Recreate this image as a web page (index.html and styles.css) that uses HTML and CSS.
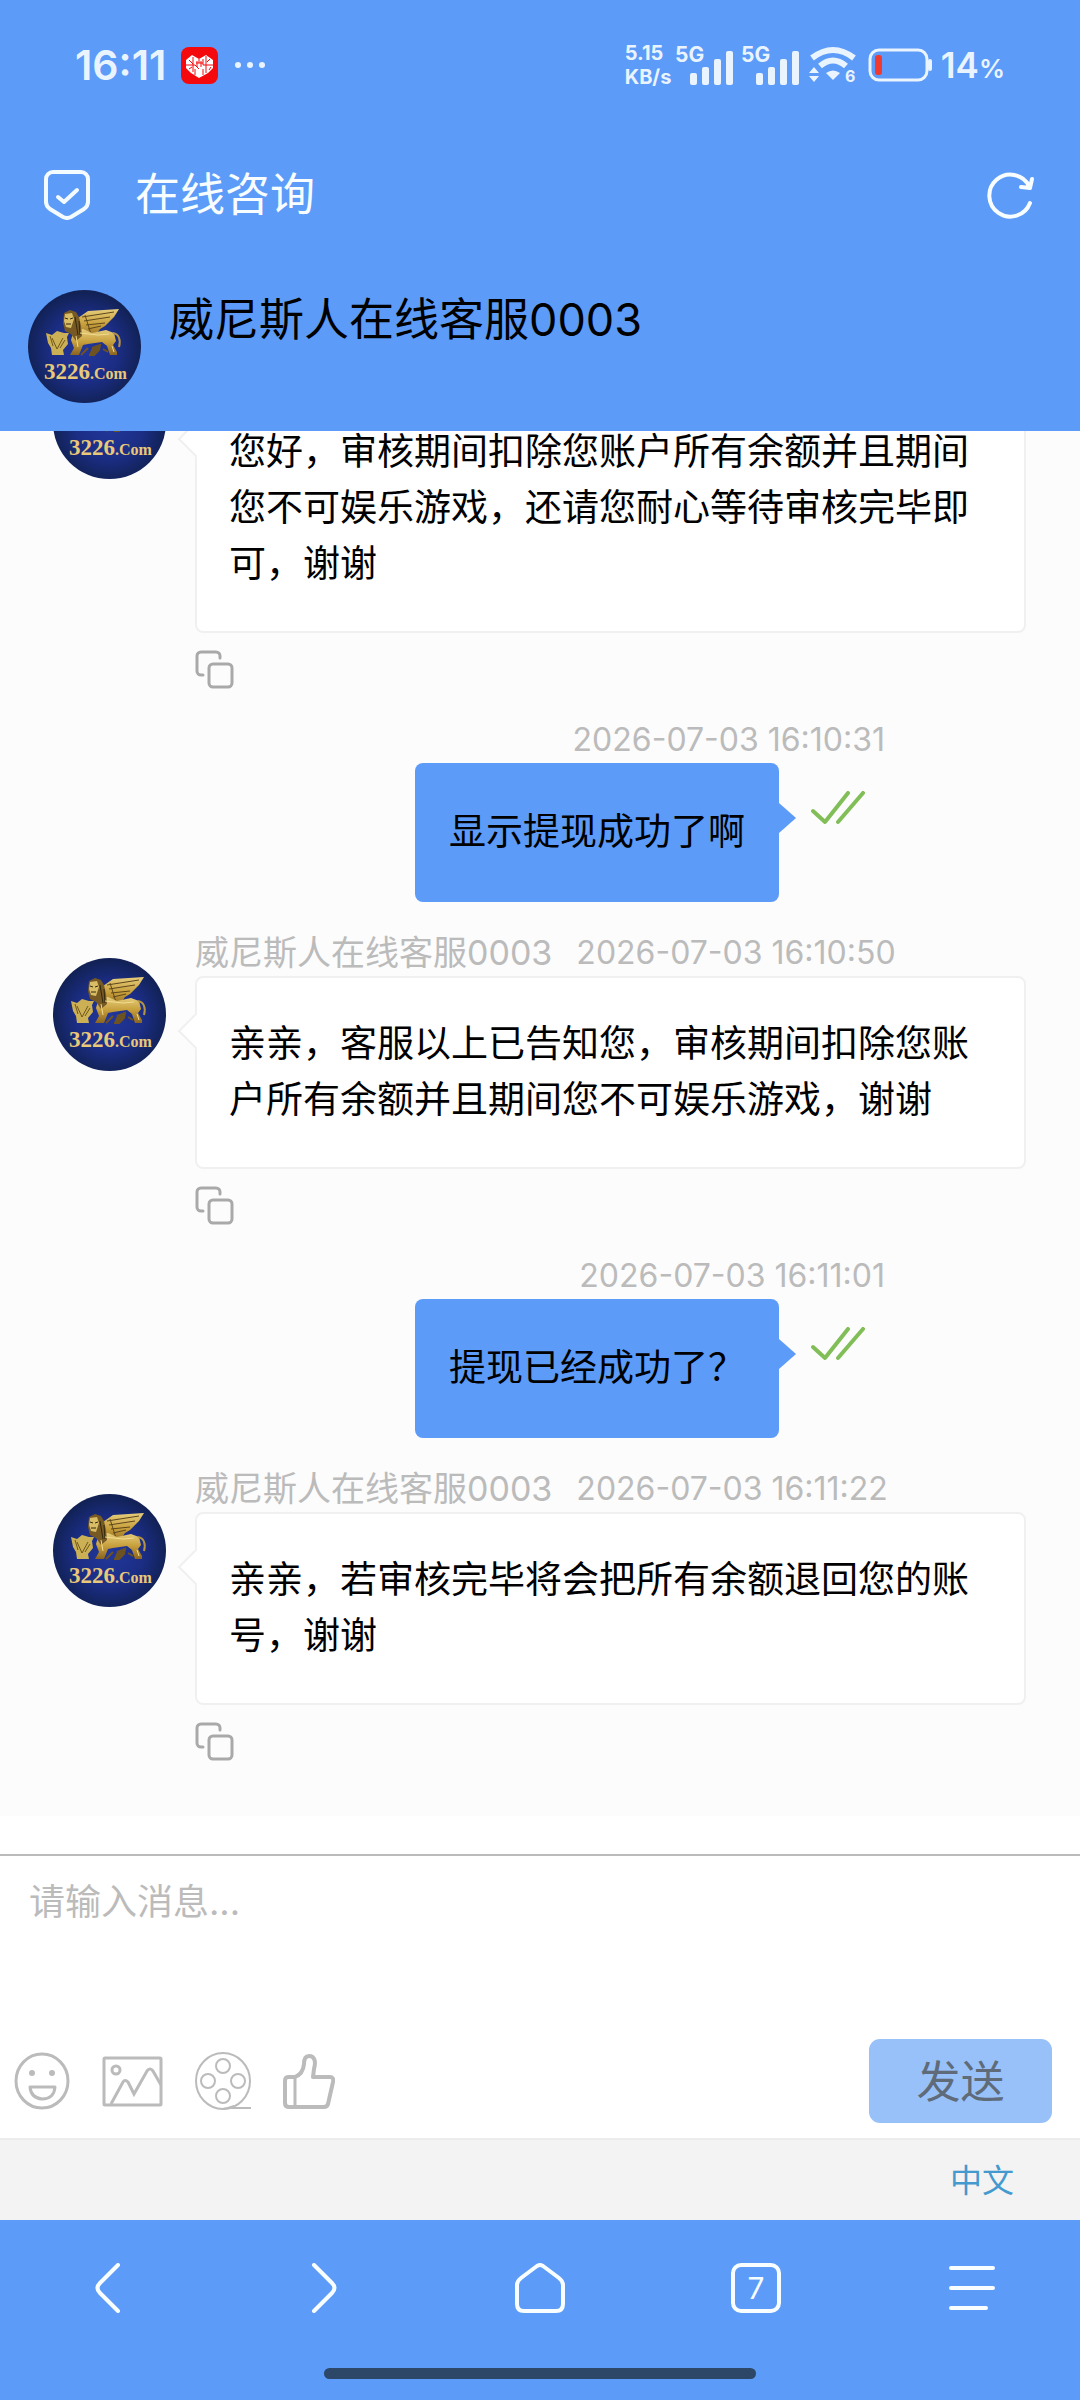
FILE: index.html
```html
<!DOCTYPE html>
<html lang="zh-CN">
<head>
<meta charset="utf-8">
<meta name="viewport" content="width=device-width, initial-scale=1">
<title>在线咨询</title>
<link rel="stylesheet" href="styles.css">
</head>
<body>
<svg class="sprite" aria-hidden="true">
  <defs>
    <radialGradient id="navy" cx="50%" cy="52%" r="50%">
      <stop offset="0" stop-color="#22379c"/>
      <stop offset="0.6" stop-color="#1b2d84"/>
      <stop offset="1" stop-color="#122257"/>
    </radialGradient>
    <linearGradient id="gold" x1="0" y1="0" x2="0" y2="1">
      <stop offset="0" stop-color="#e6cd7c"/>
      <stop offset="0.5" stop-color="#c79f3c"/>
      <stop offset="1" stop-color="#8a6420"/>
    </linearGradient>
    <symbol id="logo" viewBox="0 0 113 113">
      <circle cx="56.500" cy="56.500" r="56.500" fill="url(#navy)"/>
      <path d="M50 28 60 21 91 19 86 27 82 31 77 36 72 39 67 46 56 50 50 44Z" fill="url(#gold)"/>
      <path d="M54 27 86 22M56 31 82 27M58 35 77 33M60 39 73 36M57 25 63 44" fill="none" stroke="#5e471a" stroke-width="1"/>
      <path d="M46 40 55 39 64 43 78 40 86 43 88 51 85 55 89 62 89 65 82 65 79 56 74 52 60 54 55 55 51 65 42 65 46 58 43 50Z" fill="url(#gold)"/>
      <path d="M64 58 72 55 71 60 66 65 61 65M60 58 53 65M75 59 80 62" fill="#6d5222" stroke="#6d5222" stroke-width="2"/>
      <path d="M85 43C91 44 93 50 91 57" fill="none" stroke="#b39443" stroke-width="2"/>
      <path d="M36 23 42 20 48 22 51 27 53 36 54 46 48 51 43 44 37 41 35 33Z" fill="#765923"/>
      <path d="M37 24 44 23 46 29 43 38 38 37 36 31Z" fill="#d9bd66"/>
      <path d="M37 28 40 29M42 29 45 28M38 34 43 34M47 27 50 45M51 31 52 45" stroke="#33280f" stroke-width="1"/>
      <path d="M18 43 24 45 29 41 36 43 41 43 39 47 40 54 35 60 36 65 24 65 23 58 20 53Z" fill="#ccb055"/>
      <path d="M24 48 29 59 35 48M22 46 25 56M32 58 37 50" fill="none" stroke="#705719" stroke-width="1"/>
      <path d="M52 43 70 45 81 44M48 46 50 57M84 56 86 62" fill="none" stroke="#f1dc91" stroke-width="1"/>
      <text x="16" y="89" class="logo-text">3226<tspan class="logo-small">.Com</tspan></text>
    </symbol>
    <symbol id="copy" viewBox="0 0 39 39">
      <path d="M8 25H6a4 4 0 0 1-4-4V6a4 4 0 0 1 4-4h15a4 4 0 0 1 4 4v2" fill="none" stroke="#a9a9a9" stroke-width="3" stroke-linecap="round"/>
      <rect x="14" y="14" width="23" height="23" rx="4" fill="none" stroke="#a9a9a9" stroke-width="3"/>
    </symbol>
    <symbol id="ticks" viewBox="0 0 54 34">
      <path d="M2 20 14 31 37 2M27 31 52 2" fill="none" stroke="#82be58" stroke-width="4" stroke-linecap="round" stroke-linejoin="round"/>
    </symbol>
    <symbol id="signal" viewBox="0 0 59 42">
      <text x="0" y="18" class="signal-text">5G</text>
      <g fill="#eaf4ff"><rect x="15" y="29" width="7" height="12" rx="2"/><rect x="27" y="23" width="7" height="18" rx="2"/><rect x="39" y="15" width="7" height="26" rx="2"/><rect x="51" y="7" width="7" height="34" rx="2"/></g>
    </symbol>
  </defs>
</svg>

<div class="app">
  <header class="top">
    <div class="status">
      <span class="clock">16:11</span>
      <svg class="app-badge" viewBox="0 0 37 37" aria-hidden="true">
        <rect width="37" height="37" rx="8" fill="#f40a0c"/>
        <path d="M5 13 11 8 18 12 25 8 32 13V21L27 26 18 31 10 26 5 21Z" fill="#fff"/>
        <path d="M8 13 12 17M12 10V25M5 18H14L18 22M18 12V16M22 12V18H32M25 9V26M15 16H22M16 14V20M20 14V20M14 22V28M22 22V28M29 12 26 15M8 22 11 20M28 23 30 20" fill="none" stroke="#f40a0c" stroke-width="1"/>
      </svg>
      <svg class="dots" viewBox="0 0 32 8" aria-hidden="true" fill="#eaf4ff"><circle cx="4" cy="4" r="3"/><circle cx="16" cy="4" r="3"/><circle cx="28" cy="4" r="3"/></svg>
      <span class="speed">5.15<br>KB/s</span>
      <svg class="signal"><use href="#signal"/></svg>
      <svg class="signal"><use href="#signal"/></svg>
      <svg class="wifi" viewBox="0 0 48 38" aria-hidden="true">
        <path d="M3 12Q24-4 45 12" fill="none" stroke="#eaf4ff" stroke-width="6"/>
        <path d="M11 20Q24 9 37 20" fill="none" stroke="#eaf4ff" stroke-width="6"/>
        <path d="M17 27Q24 22 31 27L24 34Z" fill="#eaf4ff"/>
        <path d="M0 27 5 21 10 27ZM0 30H10L5 36Z" fill="#eaf4ff"/>
        <text x="36" y="36" class="wifi-text">6</text>
      </svg>
      <svg class="battery" viewBox="0 0 65 34" aria-hidden="true">
        <rect x="2" y="2" width="57" height="30" rx="9" fill="none" stroke="#eaf4ff" stroke-width="3"/>
        <rect x="60" y="11" width="4" height="12" rx="2" fill="#eaf4ff"/>
        <rect x="7" y="7" width="7" height="20" rx="3" fill="#f0392f"/>
      </svg>
      <span class="charge">14<small>%</small></span>
    </div>
    <div class="title-bar">
      <svg class="shield" viewBox="0 0 46 50" aria-hidden="true">
        <path d="M9 2H37a7 7 0 0 1 7 7V32q0 4-4 7L27 47q-4 2-8 0L6 39q-4-3-4-7V9a7 7 0 0 1 7-7Z" fill="none" stroke="#f4fbff" stroke-width="4"/>
        <path d="M14 27 20 32 33 20" fill="none" stroke="#f4fbff" stroke-width="4" stroke-linecap="round" stroke-linejoin="round"/>
      </svg>
      <h1>在线咨询</h1>
      <button class="plain refresh" type="button" aria-label="刷新">
        <svg viewBox="0 0 48 48"><path d="M43 32A21 21 0 1 1 42 15M45 8 43 17 34 16" fill="none" stroke="#f8fdff" stroke-width="4" stroke-linecap="round" stroke-linejoin="round"/></svg>
      </button>
    </div>
    <div class="agent">
      <svg class="avatar"><use href="#logo"/></svg>
      <h2>威尼斯人在线客服0003</h2>
    </div>
  </header>

  <main class="chat">
    <article class="msg from-agent">
      <svg class="avatar"><use href="#logo"/></svg>
      <div class="body">
        <div class="meta"></div>
        <p class="bubble">您好，审核期间扣除您账户所有余额并且期间您不可娱乐游戏，还请您耐心等待审核完毕即可，谢谢</p>
        <button class="plain copy" type="button" aria-label="复制"><svg><use href="#copy"/></svg></button>
      </div>
    </article>
    <article class="msg from-user">
      <div class="meta"><time>2026-07-03 16:10:31</time></div>
      <div class="line"><p class="bubble">显示提现成功了啊</p><svg class="ticks"><use href="#ticks"/></svg></div>
    </article>
    <article class="msg from-agent">
      <svg class="avatar"><use href="#logo"/></svg>
      <div class="body">
        <div class="meta"><span>威尼斯人在线客服0003</span><time>2026-07-03 16:10:50</time></div>
        <p class="bubble">亲亲，客服以上已告知您，审核期间扣除您账户所有余额并且期间您不可娱乐游戏，谢谢</p>
        <button class="plain copy" type="button" aria-label="复制"><svg><use href="#copy"/></svg></button>
      </div>
    </article>
    <article class="msg from-user">
      <div class="meta"><time>2026-07-03 16:11:01</time></div>
      <div class="line"><p class="bubble">提现已经成功了？</p><svg class="ticks"><use href="#ticks"/></svg></div>
    </article>
    <article class="msg from-agent">
      <svg class="avatar"><use href="#logo"/></svg>
      <div class="body">
        <div class="meta"><span>威尼斯人在线客服0003</span><time>2026-07-03 16:11:22</time></div>
        <p class="bubble">亲亲，若审核完毕将会把所有余额退回您的账号，谢谢</p>
        <button class="plain copy" type="button" aria-label="复制"><svg><use href="#copy"/></svg></button>
      </div>
    </article>
  </main>

  <form class="composer">
    <textarea placeholder="请输入消息..." aria-label="请输入消息"></textarea>
    <div class="tools">
      <button class="plain tool" type="button" aria-label="表情">
        <svg class="w56" viewBox="0 0 56 58" fill="none" stroke="#bbb" stroke-width="3"><ellipse cx="28" cy="29" rx="26" ry="27"/><path d="M16 35H41Q40 47 28 47 17 46 16 35Z" stroke-linejoin="round"/><g fill="#bbb" stroke="none"><circle cx="18" cy="21" r="3"/><circle cx="38" cy="21" r="3"/></g></svg>
      </button>
      <button class="plain tool" type="button" aria-label="图片">
        <svg class="w61" viewBox="0 0 61 58" fill="none" stroke="#bbb" stroke-width="3"><rect x="2" y="6" width="57" height="47" rx="1"/><circle cx="14" cy="18" r="4"/><path d="M9 52 21 30Q23 27 26 30L32 42 45 19Q48 15 51 19L59 33"/></svg>
      </button>
      <button class="plain tool" type="button" aria-label="视频">
        <svg class="w56" viewBox="0 0 56 58" fill="none" stroke="#bbb" stroke-width="2"><ellipse cx="28" cy="29" rx="27" ry="28"/><circle cx="28" cy="14" r="7"/><circle cx="13" cy="29" r="7"/><circle cx="43" cy="29" r="7"/><circle cx="28" cy="44" r="7"/><path d="M28 57Q34 56 39 54M32 56H56"/></svg>
      </button>
      <button class="plain tool" type="button" aria-label="点赞">
        <svg class="w52" viewBox="0 0 52 58" fill="none" stroke="#bbb" stroke-width="4" stroke-linejoin="round"><path d="M5 25H12Q20 22 21 12C21 7 22 4 26 4 32 4 33 10 31 17L30 25H47Q51 25 50 30L45 52Q44 55 41 55H6Q2 55 2 51V29Q2 25 5 25Z"/><path d="M12 25V55" stroke-width="3"/></svg>
      </button>
      <button class="send" type="submit">发送</button>
    </div>
  </form>

  <div class="language"><a href="#">中文</a></div>

  <footer class="bottom">
    <nav>
      <button class="plain" type="button" aria-label="后退"><svg viewBox="0 0 50 50"><path d="M35 2 17 20Q12 25 17 30L35 48"/></svg></button>
      <button class="plain" type="button" aria-label="前进"><svg viewBox="0 0 50 50"><path d="M15 2 33 20Q38 25 33 30L15 48"/></svg></button>
      <button class="plain" type="button" aria-label="主页"><svg viewBox="0 0 50 50"><path d="M22 3Q25 1 28 3L44 15Q48 18 48 22V41Q48 48 41 48H9Q2 48 2 41V22Q2 18 6 15Z"/></svg></button>
      <button class="plain tabs" type="button" aria-label="标签页">7</button>
      <button class="plain" type="button" aria-label="菜单"><svg viewBox="0 0 50 50"><path d="M4 5H46M4 25H46M4 45H39"/></svg></button>
    </nav>
    <div class="handle"></div>
  </footer>
</div>
</body>
</html>
```
FILE: styles.css
```css
* {
  box-sizing: border-box;
}

body {
  margin: 0;
  font-family: Inter, "Noto Sans CJK SC", sans-serif;
  color: #000;
}

h1, h2, p {
  margin: 0;
  font-weight: 400;
}

svg {
  display: block;
}

.sprite {
  position: absolute;
  width: 0;
  height: 0;
}

.plain {
  margin: 0;
  padding: 0;
  border: 0;
  background: none;
  font: inherit;
}

.app {
  display: flex;
  flex-direction: column;
  height: 100vh;
  background: #fff;
}

/* Header */
.top {
  flex: none;
  background: #5c9bf8;
}

.status {
  display: flex;
  align-items: center;
  height: 130px;
  padding: 0 75px;
  color: #eaf4ff;
  font-weight: 600;
}

.clock {
  width: 106px;
  font-size: 41px;
}

.app-badge {
  width: 37px;
  height: 37px;
}

.dots {
  width: 32px;
  height: 8px;
  margin-left: 16px;
}

.speed {
  margin-left: auto;
  width: 50px;
  font-size: 20px;
  line-height: 24px;
  font-weight: 700;
}

.signal {
  width: 59px;
  height: 42px;
  margin-right: 7px;
}

.signal-text {
  font: 700 21px Inter, sans-serif;
  fill: #eaf4ff;
}

.wifi {
  width: 48px;
  height: 38px;
  margin-left: 2px;
  overflow: visible;
}

.wifi-text {
  font: 700 16px Inter, sans-serif;
  fill: #eaf4ff;
}

.battery {
  width: 65px;
  height: 34px;
  margin: 0 8px 0 11px;
}

.charge {
  font-size: 35px;
}

.charge small {
  font-size: 26px;
}

.title-bar {
  display: flex;
  align-items: center;
  height: 130px;
  padding: 0 45px 0 44px;
  color: #f8fdff;
}

.shield {
  width: 46px;
  height: 50px;
}

.title-bar h1 {
  flex: 1;
  margin-left: 45px;
  font-size: 45px;
  line-height: 60px;
}

.refresh svg {
  width: 48px;
  height: 48px;
}

.agent {
  display: flex;
  gap: 28px;
  padding: 30px 28px 28px;
}

.agent h2 {
  font-size: 45px;
  line-height: 60px;
}

.avatar {
  flex: none;
  width: 113px;
  height: 113px;
}

.logo-text {
  font: 700 23px "Liberation Serif", serif;
  fill: #e9c878;
}

.logo-small {
  font-size: 16px;
}

/* Conversation */
.chat {
  flex: 1;
  min-height: 0;
  display: flex;
  flex-direction: column;
  justify-content: flex-end;
  gap: 28px;
  overflow: hidden;
  margin-bottom: 38px;
  padding: 0 54px 55px 53px;
  background: #fcfcfc;
}

.msg {
  flex: none;
  display: flex;
}

.meta {
  display: flex;
  gap: 24px;
  height: 46px;
  color: #bbb;
  font-size: 34px;
  line-height: 46px;
  white-space: nowrap;
}

.meta time {
  font-size: 32px;
}

.bubble {
  position: relative;
  border-radius: 8px;
  font-size: 37px;
  line-height: 56px;
}

.from-agent {
  gap: 29px;
}

.from-agent .avatar {
  margin-top: 28px;
}

.body {
  flex: 1;
  min-width: 0;
}

.from-agent .bubble {
  padding: 38px 32px 39px;
  border: 2px solid #f0f0f0;
  background: #fff;
}

.from-agent .bubble::before {
  content: "";
  position: absolute;
  top: 40px;
  left: -14px;
  width: 24px;
  height: 24px;
  border: 2px solid #f0f0f0;
  border-width: 0 0 2px 2px;
  background: #fff;
  transform: rotate(45deg);
}

.copy {
  display: block;
  margin-top: 17px;
}

.copy svg {
  width: 39px;
  height: 39px;
}

.from-user {
  flex-direction: column;
  align-items: flex-end;
  padding-right: 141px;
}

.line {
  display: flex;
  align-items: flex-start;
}

.from-user .bubble {
  padding: 41px 34px 42px;
  background: #5c9bf8;
}

.from-user .bubble::after {
  content: "";
  position: absolute;
  top: 40px;
  left: 100%;
  border: 15px solid transparent;
  border-left: 17px solid #5c9bf8;
  border-right: 0;
}

.ticks {
  width: 54px;
  height: 34px;
  margin: 28px 20px 0 32px;
}

/* Message entry */
.composer {
  flex: none;
  border-top: 2px solid #bbb;
  background: #fff;
}

.composer textarea {
  display: block;
  width: 100%;
  height: 183px;
  padding: 18px 29px;
  border: 0;
  outline: 0;
  resize: none;
  background: none;
  font: inherit;
  font-size: 36px;
  line-height: 56px;
}

.composer textarea::placeholder {
  color: #bbb;
}

.tools {
  display: flex;
  align-items: center;
  gap: 32px;
  padding: 0 28px 15px 14px;
}

.tool svg {
  height: 58px;
}

.w52 {
  width: 52px;
}

.w56 {
  width: 56px;
}

.w61 {
  width: 61px;
}

.send {
  width: 183px;
  height: 84px;
  margin-left: auto;
  padding: 0 0 4px;
  border: 0;
  border-radius: 11px;
  background: #98c1fa;
  color: #5f6b78;
  font: inherit;
  font-size: 44px;
}

.language {
  flex: none;
  display: flex;
  align-items: center;
  justify-content: flex-end;
  height: 82px;
  padding: 0 66px 5px 0;
  border-top: 2px solid #ececec;
  background: #f3f3f3;
}

.language a {
  color: #4499cf;
  font-size: 32px;
  text-decoration: none;
}

/* Browser bar */
.bottom {
  flex: none;
  height: 180px;
  padding-top: 43px;
  background: #5c9bf8;
}

.bottom nav {
  display: grid;
  grid-template-columns: repeat(5, 1fr);
  justify-items: center;
}

.bottom svg {
  width: 50px;
  height: 50px;
  fill: none;
  stroke: #f8fdff;
  stroke-width: 4;
  stroke-linecap: round;
  stroke-linejoin: round;
}

.tabs {
  width: 50px;
  height: 50px;
  border: 4px solid #f8fdff;
  border-radius: 10px;
  color: #f8fdff;
  font-size: 30px;
  line-height: 40px;
}

.handle {
  width: 40%;
  height: 11px;
  margin: 55px auto 0;
  border-radius: 6px;
  background: #2c4767;
}
```
